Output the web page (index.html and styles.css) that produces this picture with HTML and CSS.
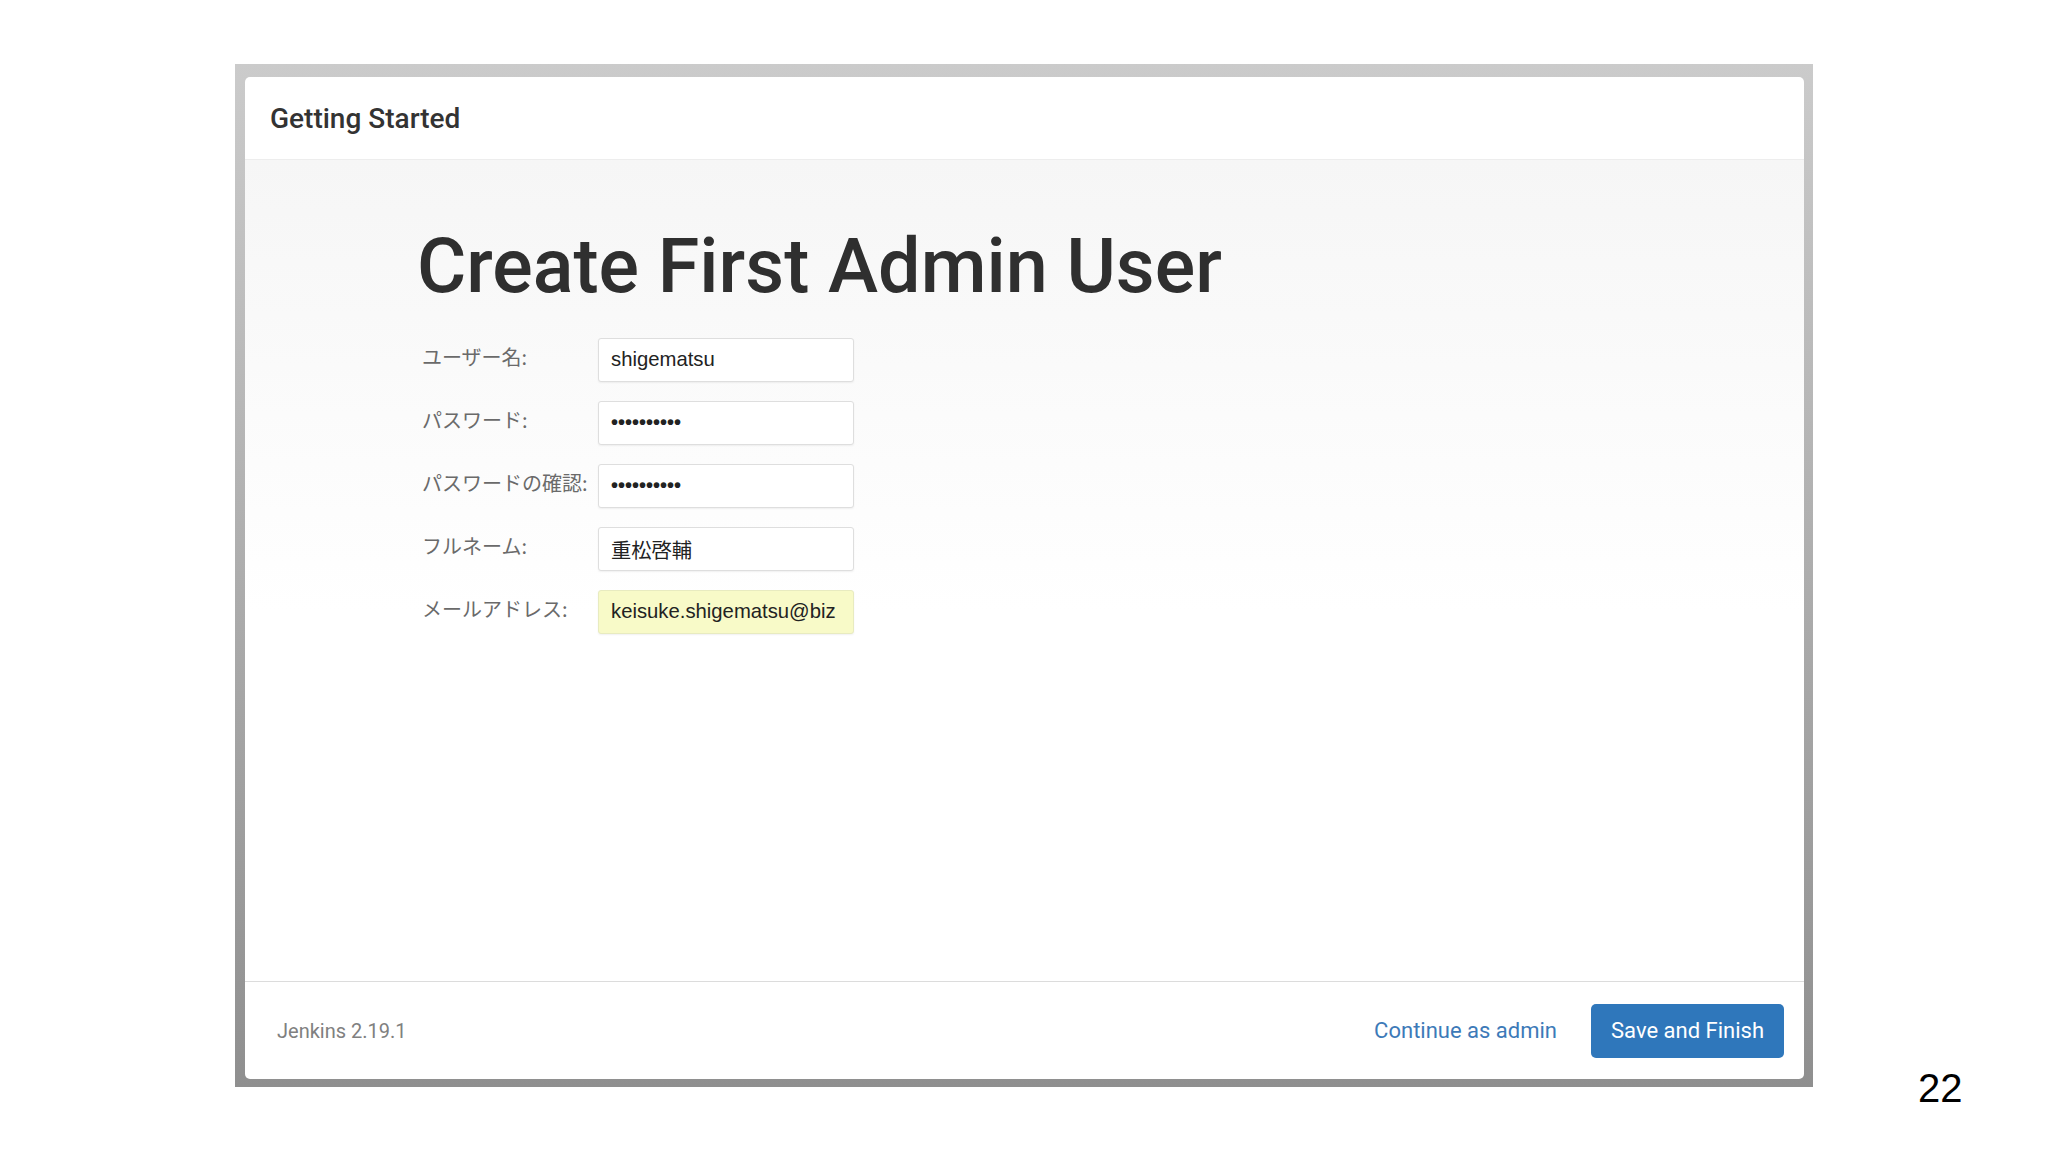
FILE: index.html
```html
<!DOCTYPE html>
<html lang="ja">
<head>
<meta charset="utf-8">
<title>Create First Admin User</title>
<link rel="stylesheet" href="styles.css">
</head>
<body>
<div class="slide">
  <div class="frame">
    <div class="card">
      <div class="card-header">Getting Started</div>
      <div class="card-body">
        <h1 class="title">Create First Admin User</h1>
        <div class="form">
          <div class="row"><label class="lbl">ユーザー名:</label><div class="field">shigematsu</div></div>
          <div class="row"><label class="lbl">パスワード:</label><div class="field dots">••••••••••</div></div>
          <div class="row"><label class="lbl">パスワードの確認:</label><div class="field dots">••••••••••</div></div>
          <div class="row"><label class="lbl">フルネーム:</label><div class="field">重松啓輔</div></div>
          <div class="row"><label class="lbl">メールアドレス:</label><div class="field autofill">keisuke.shigematsu@biz</div></div>
        </div>
      </div>
      <div class="card-footer">
        <span class="version">Jenkins 2.19.1</span>
        <span class="spacer"></span>
        <a class="link">Continue as admin</a>
        <button class="btn">Save and Finish</button>
      </div>
    </div>
  </div>
  <div class="pagenum">22</div>
</div>
</body>
</html>
```
FILE: styles.css
```css
html, body {
  margin: 0;
  padding: 0;
  background: #ffffff;
}
body {
  width: 2048px;
  height: 1152px;
  overflow: hidden;
  font-family: Roboto, "Noto Sans CJK JP", sans-serif;
}
.slide {
  display: flex;
  align-items: flex-end;
  padding: 64px 0 0 235px;
}
.frame {
  box-sizing: border-box;
  width: 1578px;
  height: 1023px;
  padding: 13px 9px 8px 10px;
  background: linear-gradient(180deg, #cbcbcb 0%, #adadad 50%, #8f8f8f 100%);
}
.card {
  display: flex;
  flex-direction: column;
  height: 100%;
  background: #ffffff;
  border-radius: 5px;
  overflow: hidden;
}
.card-header {
  box-sizing: border-box;
  height: 83px;
  flex: none;
  display: flex;
  align-items: center;
  padding-left: 25px;
  border-bottom: 1px solid #ededed;
  font-size: 28px;
  font-weight: 500;
  color: #333333;
}
.card-body {
  flex: 1;
  padding: 69px 0 0 172px;
  background: linear-gradient(180deg, #f6f6f6 0%, #fafafa 25%, #ffffff 55%);
}
.title {
  margin: 0 0 33px 0;
  font-size: 75.5px;
  line-height: 1;
  font-weight: 500;
  color: #2f2f2f;
}
.form {
  display: flex;
  flex-direction: column;
  gap: 19px;
}
.row {
  display: flex;
  align-items: center;
}
.lbl {
  box-sizing: border-box;
  width: 181px;
  padding-left: 5px;
  margin-top: -6px;
  font-family: "Noto Sans CJK JP", sans-serif;
  font-size: 20px;
  color: #6a6a6a;
  white-space: nowrap;
}
.field {
  box-sizing: border-box;
  width: 256px;
  height: 44px;
  padding: 0 12px;
  display: flex;
  align-items: center;
  border: 1px solid #dedede;
  border-radius: 3px;
  background: #ffffff;
  box-shadow: 0 1px 2px rgba(0, 0, 0, 0.06);
  font-family: "Liberation Sans", "Noto Sans CJK JP", sans-serif;
  font-size: 20.3px;
  color: #222222;
  white-space: nowrap;
  overflow: hidden;
}
.field.dots {
  font-size: 20px;
  font-weight: bold;
}
.field.autofill {
  background: #f8fac8;
  border-color: #e8ebc0;
}
.card-footer {
  box-sizing: border-box;
  height: 98px;
  flex: none;
  display: flex;
  align-items: center;
  padding: 0 20px 0 32px;
  border-top: 1px solid #dcdcdc;
}
.version {
  font-size: 20px;
  color: #808080;
}
.spacer {
  flex: 1;
}
.link {
  font-size: 22px;
  color: #3d7ab8;
  margin-right: 34px;
  cursor: pointer;
}
.btn {
  box-sizing: border-box;
  height: 54px;
  padding: 0 20px;
  border: none;
  border-radius: 5px;
  background: #2f77bb;
  color: #ffffff;
  font-family: Roboto, sans-serif;
  font-size: 22px;
}
.pagenum {
  margin-left: 105px;
  margin-bottom: -21px;
  font-family: "Liberation Sans", Arial, sans-serif;
  font-size: 40px;
  line-height: 1;
  color: #000000;
}
```
